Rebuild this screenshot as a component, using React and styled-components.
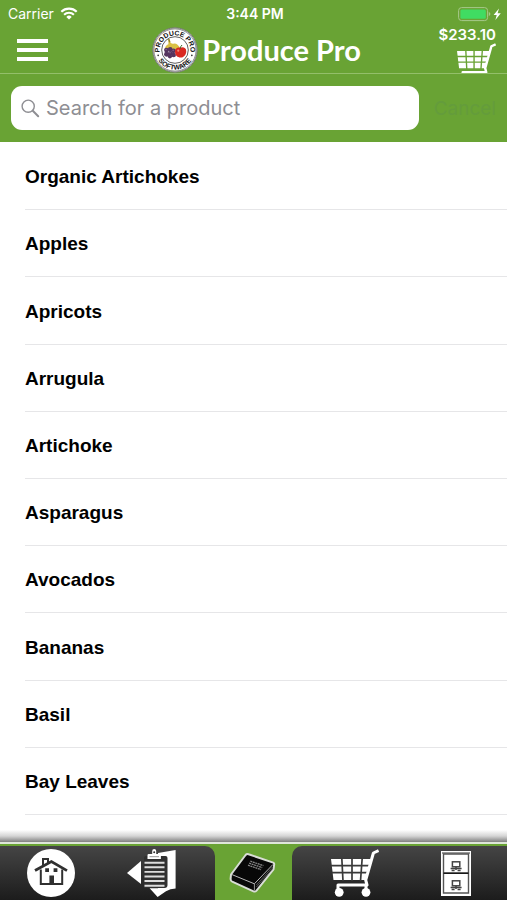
import React, { useState } from 'react';
import styled, { createGlobalStyle, ThemeProvider } from 'styled-components';

function App() {
  const [keyword, setKeyword] = useState('');
  const list = PRODUCT_LIST.filter(name =>
    name.toLowerCase().includes(keyword.toLowerCase())
  );

  return (
    <ThemeProvider theme={theme}>
      <GlobalStyle />
      <Container>
        <Header>
          <StatusBar>
            <StatusItem>
              Carrier
              <WifiIcon />
            </StatusItem>
            <Time>3:44 PM</Time>
            <StatusItem right>
              <BatteryIcon />
            </StatusItem>
          </StatusBar>
          <NavBar>
            <MenuButton aria-label="Menu">
              <span />
              <span />
              <span />
            </MenuButton>
            <Brand>
              <LogoIcon />
              <Title>Produce Pro</Title>
            </Brand>
            <CartLink href="#cart">
              <span>$233.10</span>
              <CartIcon width="39" height="30" viewBox="0 0 48 37" />
            </CartLink>
          </NavBar>
          <SearchBar>
            <SearchBox>
              <SearchIcon />
              <SearchInput
                aria-label="Search for a product"
                placeholder="Search for a product"
                value={keyword}
                onChange={e => setKeyword(e.target.value)}
              />
            </SearchBox>
            <CancelButton onClick={() => setKeyword('')}>Cancel</CancelButton>
          </SearchBar>
        </Header>
        <ProductList>
          {list.map(name => (
            <Product key={name}>{name}</Product>
          ))}
        </ProductList>
        <Shadow />
        <TabBar>
          <TabGroup side="left">
            <Tab href="#home" aria-label="Home">
              <HomeIcon />
            </Tab>
            <Tab href="#orders" aria-label="Orders">
              <ClipboardIcon />
            </Tab>
          </TabGroup>
          <Tab href="#catalog" aria-label="Catalog">
            <BookIcon />
          </Tab>
          <TabGroup side="right">
            <Tab href="#cart" aria-label="Cart">
              <CartIcon width="48" height="48" viewBox="0 0 48 48" />
            </Tab>
            <Tab href="#history" aria-label="History">
              <CabinetIcon />
            </Tab>
          </TabGroup>
        </TabBar>
      </Container>
    </ThemeProvider>
  );
}
export default App;

function WifiIcon() {
  return (
    <svg width="18" height="13" viewBox="0 0 18 13" fill="none" stroke="#fff">
      <path d="M1.3 4.8a11 11 0 0 1 15.4 0" strokeWidth="2.2" />
      <path d="M4.1 7.8a7 7 0 0 1 9.8 0" strokeWidth="2.1" />
      <path d="M9 12.6 6.3 9.9a3.9 3.9 0 0 1 5.4 0z" fill="#fff" stroke="none" />
    </svg>
  );
}

function BatteryIcon() {
  return (
    <svg width="44" height="16" viewBox="0 0 44 16">
      <rect
        x="0.6"
        y="1.6"
        width="29"
        height="13"
        rx="3"
        fill="none"
        stroke="#a6c98a"
      />
      <rect x="2.4" y="3.4" width="25.4" height="9.4" rx="1.5" fill="#40dc62" />
      <path d="M30.8 6v4q1.6-.6 1.6-2t-1.6-2z" fill="#a6c98a" />
      <path d="M41 2.5 35.6 9h3.1l-1.3 5 5.4-6.8h-3.2z" fill="#fff" />
    </svg>
  );
}

function LogoIcon() {
  return (
    <svg width="46" height="46" viewBox="0 0 47 47">
      <circle cx="23.5" cy="23.5" r="22.7" fill="#fff" stroke="#777" />
      <circle cx="23.5" cy="23.5" r="21.6" fill="none" stroke="#333" strokeWidth="0.6" />
      <circle cx="23.5" cy="23.5" r="13.6" fill="#fff" stroke="#333" strokeWidth="0.8" />
      <path id="logoTop" d="M8.4 28.5a15.7 15.7 0 1 1 30.2 0" fill="none" />
      <path id="logoBottom" d="M3.3 26a20.4 20.4 0 0 0 40.4 0" fill="none" />
      <LogoText>
        <textPath href="#logoTop" startOffset="50%">
          PRODUCE PRO
        </textPath>
      </LogoText>
      <LogoText>
        <textPath href="#logoBottom" startOffset="50%">
          SOFTWARE
        </textPath>
      </LogoText>
      <circle cx="6.3" cy="29" r="0.8" fill="#222" />
      <circle cx="40.7" cy="29" r="0.8" fill="#222" />
      <path
        d="M17 12.5q1.5 4.4 4.5 4.6 4-1.6 7.4 4.5l-3 2.5-12.6-2q0-3 3.4-4.6z"
        fill="#d9c044"
      />
      <path d="M16.3 12.4l1.6-.4 1 3.4-1.5.4z" fill="#9a8a25" />
      <g fill="#55355f">
        <circle cx="14.8" cy="23.6" r="2.5" />
        <circle cx="18.6" cy="22.8" r="2.4" />
        <circle cx="22" cy="24.3" r="2.4" />
        <circle cx="14.8" cy="27.8" r="2.5" />
        <circle cx="18.8" cy="27" r="2.5" />
        <circle cx="22.1" cy="28.6" r="2.4" />
        <circle cx="18.3" cy="30" r="2.2" />
      </g>
      <g fill="#8d6b98">
        <circle cx="14.4" cy="23" r="0.7" />
        <circle cx="18.4" cy="26.2" r="0.7" />
        <circle cx="21.6" cy="23.8" r="0.7" />
      </g>
      <path
        d="M29 21.4c2-1.3 6-.6 6 3.3 0 3.8-2.7 6.5-5.8 6.5s-5.7-2.3-5.7-5.9c0-3.7 3.4-5.3 5.5-3.9z"
        fill="#d92822"
      />
      <path d="M29 22q.1-2.5 1.7-3.6" fill="none" stroke="#38601f" strokeWidth="1" />
      <circle cx="26.8" cy="24.2" r="1.1" fill="#f28a78" />
    </svg>
  );
}

function SearchIcon() {
  return (
    <svg
      width="19"
      height="19"
      viewBox="0 0 19 19"
      fill="none"
      stroke="#8e8e93"
      strokeLinecap="round"
    >
      <circle cx="7.2" cy="7.2" r="6.1" strokeWidth="1.4" />
      <path d="M11.8 11.8l5.4 5.4" strokeWidth="2" />
    </svg>
  );
}

function CartIcon(props) {
  return (
    <svg {...props} fill="#fff">
      <path d="M0 10h41l-6.5 21H2.5z" />
      <path
        d="M0 16.6h42M1 23.6h38M10.8 9l1.2 23M21 9v23M31.2 9l-1.7 23"
        stroke={props.height === '48' ? '#3a3a3a' : '#69a334'}
        strokeWidth="1.7"
      />
      <path
        d="M47.6 1.6 42.4 4 34.7 31l1.3 5H7v6"
        fill="none"
        stroke="#fff"
        strokeWidth="3"
        strokeLinejoin="round"
      />
      <path d="M35 36v6" stroke="#fff" strokeWidth="3" />
      <circle cx="8.2" cy="43.3" r="4.4" />
      <circle cx="35" cy="43.3" r="4.4" />
    </svg>
  );
}

function HomeIcon() {
  return (
    <svg width="48" height="48" viewBox="0 0 48 48">
      <circle cx="24" cy="24" r="24" fill="#fff" />
      <g fill="none" stroke="#303030" strokeWidth="2">
        <path d="M8 21.6 24.4 12.6 40 21.6" strokeWidth="2.8" />
        <path d="M13.8 20.5v14.4h21.4V20.5" />
        <path d="M16 16.5V10h5v4" />
      </g>
      <path
        d="M22.4 26.5h4.6v8.3h-4.6zM18.2 19.2h3.8V23h-3.8zM26.6 19.2h3.8V23h-3.8z"
        fill="#303030"
      />
    </svg>
  );
}

function ClipboardIcon() {
  return (
    <svg width="50" height="48" viewBox="0 0 50 48">
      <path d="M0 24 14 12v23z" fill="#fff" />
      <path
        d="M31 4 48.6 1v38.6q-5.4 0-9.6 2.7L30.6 48q-5-5.5-8-8.7H31z"
        fill="#fff"
      />
      <path d="M17 9q0-2 2-2h19.5q2 0 2 2v27q0 3-3 3H17z" fill="#303030" />
      <path
        d="M17.5 13.8h20M17.5 18.3h20M17.5 22.9h20M17.5 27.5h20M17.5 32h20M17.5 36.7h20"
        stroke="#ddd"
        strokeWidth="1.9"
      />
      <path
        d="M20.5 10V6.2q0-1.2 1.2-1.2h3.5V2q0-2 2-2t2 2v3h3.5q1.2 0 1.2 1.2V10z"
        fill="#fff"
      />
      <circle cx="27.2" cy="3.2" r="1" fill="#303030" />
      <path d="M22.5 7.7h9.5" stroke="#777" strokeWidth="0.8" />
    </svg>
  );
}

function BookIcon() {
  return (
    <svg width="48" height="42" viewBox="0 0 48 42">
      <path
        d="M2 22.5 16.6 3q1.2-1.4 3-.7l24.6 8.3q1.4.7.9 2.2l-.6 4.6-17 21.2q-1.2 1.4-3 .8L3.2 29.7q-1.6-.8-1.6-2.8z"
        fill="#080808"
        stroke="#d8ddd5"
        strokeWidth="2"
        strokeLinejoin="round"
      />
      <path
        d="M3 22.6l22.4 9.2L44 12.4"
        fill="none"
        stroke="#b8b8b8"
        strokeWidth="1"
      />
      <path d="M25.4 31.8v6.4" stroke="#999" strokeWidth="1" />
      <path
        d="M27.4 35 43.4 17M27.4 33 43.4 15"
        stroke="#777"
        strokeWidth="0.7"
      />
      <path
        d="M21.4 9.2l13 4.4M20.2 11.2l13 4.4M19 13.2l13 4.4"
        stroke="#888"
        strokeWidth="1.3"
        strokeDasharray="2 0.6"
      />
    </svg>
  );
}

function CabinetIcon() {
  return (
    <svg width="30" height="45" viewBox="0 0 30 45">
      <path d="M0 0h30v45H0z" fill="#fff" />
      <path d="M1 1h28v2H1z" fill="#999" />
      <path
        d="M2.5 3h25v39h-25zM2.5 22.2h25"
        fill="none"
        stroke="#555"
        strokeWidth="1.4"
      />
      <path d="M2.5 22.2h25" stroke="#111" strokeWidth="1.4" />
      <Drawer />
      <Drawer transform="translate(0 19)" />
    </svg>
  );
}

function Drawer(props) {
  return (
    <g {...props} fill="none" stroke="#444" strokeWidth="1.5">
      <rect x="11.4" y="10.8" width="7.4" height="5" />
      <path d="M9.6 17.4h11M15 16v3M10.6 19.4h3M16.6 19.4h3" />
    </g>
  );
}

const PRODUCT_LIST = [
  'Organic Artichokes',
  'Apples',
  'Apricots',
  'Arrugula',
  'Artichoke',
  'Asparagus',
  'Avocados',
  'Bananas',
  'Basil',
  'Bay Leaves',
];

const theme = {
  green: '#69a334',
  line: '#e6e6e8',
};

const GlobalStyle = createGlobalStyle`
  * {
    box-sizing: border-box;
  }
  body {
    margin: 0;
    background-color: white;
    font-family: Inter, 'Liberation Sans', sans-serif;
  }
  svg {
    display: block;
    flex-shrink: 0;
  }
`;
const Container = styled.div`
  display: flex;
  flex-direction: column;
  min-height: 100vh;
`;
const Header = styled.header`
  background-color: ${({ theme }) => theme.green};
  color: white;
`;
const StatusBar = styled.div`
  display: flex;
  align-items: center;
  height: 27px;
  padding: 0 5px 0 8px;
  font-size: 14px;
`;
const StatusItem = styled.div`
  flex: 1;
  display: flex;
  align-items: center;
  gap: 6px;
  justify-content: ${props => (props.right ? 'flex-end' : 'flex-start')};
`;
const Time = styled.time`
  font-weight: 600;
`;
const NavBar = styled.nav`
  display: grid;
  grid-template-columns: 1fr auto 1fr;
  align-items: center;
  height: 47px;
  padding: 0 11px 0 17px;
  border-bottom: 1px solid #93bf6a;
`;
const MenuButton = styled.button`
  display: flex;
  flex-direction: column;
  gap: 5px;
  width: 31px;
  padding: 0;
  border: none;
  background: none;
  & span {
    height: 4px;
    background-color: white;
  }
`;
const Brand = styled.div`
  display: flex;
  align-items: center;
  gap: 4px;
`;
const Title = styled.h1`
  margin: 0;
  font-family: Lato, sans-serif;
  font-size: 29px;
  line-height: 36px;
`;
const LogoText = styled.text`
  fill: #111;
  font-family: 'Liberation Sans', sans-serif;
  font-size: 7px;
  font-weight: bold;
  text-anchor: middle;
`;
const CartLink = styled.a`
  display: flex;
  flex-direction: column;
  align-items: flex-end;
  color: white;
  font-size: 15px;
  font-weight: 600;
  line-height: 16px;
  text-decoration: none;
`;
const SearchBar = styled.div`
  display: flex;
  align-items: center;
  gap: 15px;
  padding: 12px 11px;
`;
const SearchBox = styled.label`
  flex: 1;
  display: flex;
  align-items: center;
  gap: 6px;
  height: 44px;
  padding: 0 10px;
  border-radius: 11px;
  background-color: white;
`;
const SearchInput = styled.input`
  flex: 1;
  min-width: 0;
  padding: 0;
  border: none;
  outline: none;
  background: none;
  color: #222;
  font-family: inherit;
  font-size: 20px;
  &::placeholder {
    color: #8e8e93;
  }
`;
const CancelButton = styled.button`
  padding: 0;
  border: none;
  background: none;
  color: #649c3c;
  font-family: inherit;
  font-size: 19px;
`;
const ProductList = styled.ul`
  flex: 1;
  display: flex;
  flex-direction: column;
  margin: 0;
  padding: 1px 0 15px 25px;
  list-style: none;
`;
const Product = styled.li`
  flex: 1;
  display: flex;
  align-items: center;
  min-height: 67px;
  padding-top: 2px;
  border-bottom: 1px solid ${({ theme }) => theme.line};
  color: black;
  font-family: 'Liberation Sans', Arial, sans-serif;
  font-size: 19px;
  font-weight: bold;
`;
const Shadow = styled.div`
  height: 12px;
  background: linear-gradient(#fff, #d5d5d5 50%, #808080);
`;
const TabBar = styled.nav`
  display: grid;
  grid-template-columns: 17fr 6fr 17fr;
  height: 58px;
  padding-top: 2px;
  border-top: 2px solid #dfe6da;
  background-color: ${({ theme }) => theme.green};
`;
const TabGroup = styled.div`
  display: flex;
  background: linear-gradient(#454545, #1c1c1c);
  ${props =>
    props.side === 'left'
      ? 'padding-right: 13px; border-top-right-radius: 10px;'
      : 'padding-left: 13px; border-top-left-radius: 10px;'}
`;
const Tab = styled.a`
  flex: 1;
  display: flex;
  align-items: center;
  justify-content: center;
`;
